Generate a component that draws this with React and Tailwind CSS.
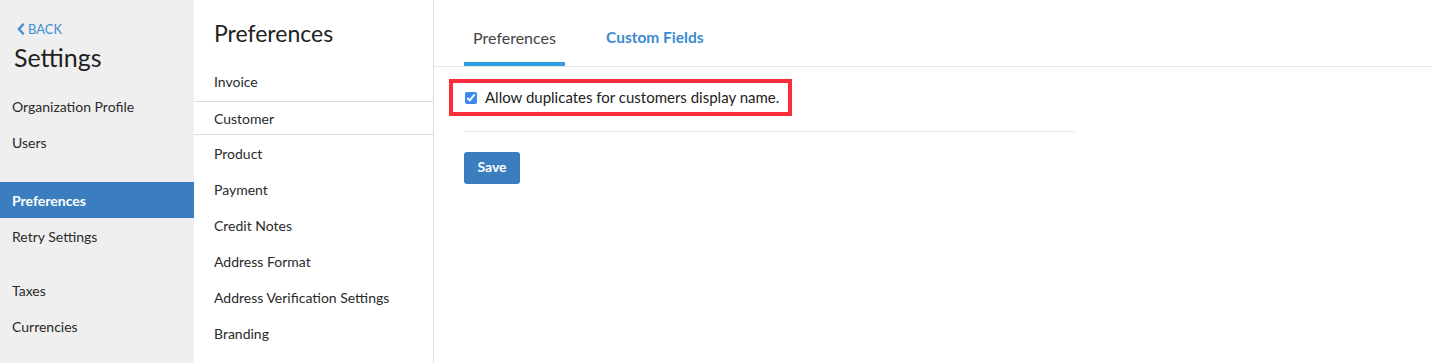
import React from 'react';

const settingsNav = [
  { label: 'Organization Profile' },
  { label: 'Users', gap: 'mb-[22px]' },
  { label: 'Preferences', active: true },
  { label: 'Retry Settings', gap: 'mb-[18px]' },
  { label: 'Taxes' },
  { label: 'Currencies' },
];

const prefNav = ['Invoice', 'Customer', 'Product', 'Payment', 'Credit Notes', 'Address Format', 'Address Verification Settings', 'Branding'];

const App = () => {
  return (
    <div className="flex h-[363px] w-[1432px] overflow-hidden bg-white text-[#222]" style={{ fontFamily: 'Lato, "Open Sans", sans-serif' }}>
      {/* sidebar */}
      <aside className="w-[194px] shrink-0 bg-[#efefef] flex flex-col">
        <div className="pl-[16px] pt-[21px]">
          <a className="flex items-center gap-[2px] text-[#408dd0] text-[13px] leading-[16px]">
            <svg width="10" height="12" viewBox="0 0 10 12" className="mt-[-1px]">
              <path d="M7 1.5 L2.8 6 L7 10.5" fill="none" stroke="#408dd0" strokeWidth="2.4" strokeLinejoin="round" strokeLinecap="round" />
            </svg>
            BACK
          </a>
          <h1 className="text-[25px] leading-[30px] mt-[5px] ml-[-2px] text-[#1f1f1f]">Settings</h1>
        </div>
        <nav className="mt-[16px] flex flex-col">
          {settingsNav.map((item) => (
            <div key={item.label} className={item.gap || ''}>
              <div className={`h-[36px] flex items-center pl-[12px] text-[14px] ${item.active ? 'bg-[#3a7ebf] text-white font-bold' : 'text-[#2a2a2a]'}`}>
                {item.label}
              </div>
            </div>
          ))}
        </nav>
      </aside>

      {/* preferences list */}
      <section className="w-[240px] shrink-0 border-r border-[#dcdcdc] flex flex-col">
        <h2 className="pl-[20px] pt-[19px] text-[23px] leading-[28px] text-[#222]">Preferences</h2>
        <ul className="mt-[16px] text-[14px]">
          {prefNav.map((p) => (
            <li key={p} className={`flex items-center pl-[20px] text-[#2a2a2a] ${p === 'Customer' ? 'border-y border-[#dcdcdc] mt-[2px] h-[34px]' : 'h-[36px]'}`}>
              {p}
            </li>
          ))}
        </ul>
      </section>

      {/* main */}
      <main className="flex-1 flex flex-col">
        <div className="flex border-b border-[#e5e5e5] pl-[30px] h-[67px] items-end">
          <div className="w-[101px] h-full flex flex-col">
            <div className="flex-1 flex items-center justify-center pt-[14px] text-[16px] text-[#444]">Preferences</div>
            <div className="h-[4px] bg-[#2d9fe0]"></div>
          </div>
          <div className="ml-[41px] h-full flex items-center pt-[14px] pb-[4px] text-[15.5px] font-bold text-[#3a8ccf]">Custom Fields</div>
        </div>

        <div className="pl-[15px] pt-[12px]">
          <div className="w-[343px] h-[37px] border-[4px] border-[#fb2d3a] flex items-center pl-[12px] gap-[8px]">
            <input type="checkbox" defaultChecked className="w-[12px] h-[12px] accent-[#3b88f0] m-0" />
            <span className="text-[15px] text-[#222]">Allow duplicates for customers display name.</span>
          </div>
          <div className="ml-[15px] w-[611px] mt-[15px] border-t border-[#e8e8e8]"></div>
          <button className="ml-[15px] mt-[20px] w-[56px] h-[32px] pb-[3px] rounded-[3px] bg-[#3a7ebf] text-white text-[14px] font-bold">Save</button>
        </div>
      </main>
    </div>
  );
};

export default App;
